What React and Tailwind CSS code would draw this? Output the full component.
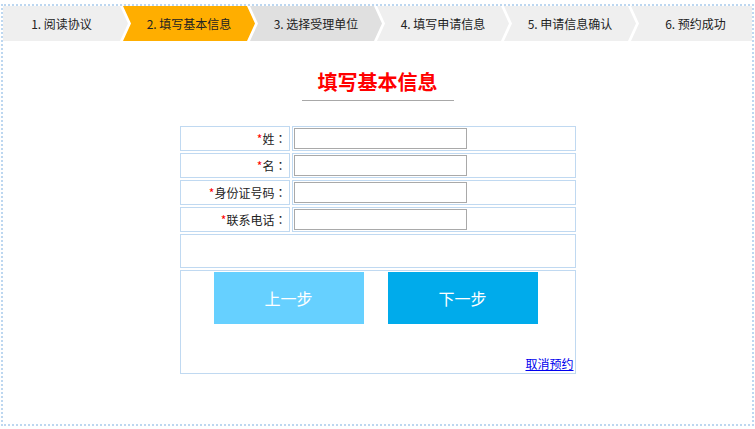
const steps = [
  { label: "1. 阅读协议", bg: "bg-[#efefef]", first: true },
  { label: "2. 填写基本信息", bg: "bg-[#ffae00]" },
  { label: "3. 选择受理单位", bg: "bg-[#e0e0e0]" },
  { label: "4. 填写申请信息", bg: "bg-[#efefef]" },
  { label: "5. 申请信息确认", bg: "bg-[#efefef]" },
  { label: "6. 预约成功", bg: "bg-[#efefef]", last: true },
];

const fields = ["姓", "名", "身份证号码", "联系电话"];

function Step({ label, bg, first, last }) {
  // chevron shapes; the 3px white gap comes from the overlap
  let shape = "w-[132px] -ml-[5px] pl-[8px] pr-[8px] [clip-path:polygon(0_0,calc(100%_-_8px)_0,100%_50%,calc(100%_-_8px)_100%,0_100%,8px_50%)]";
  if (first) shape = "w-[125px] pr-[8px] [clip-path:polygon(0_0,calc(100%_-_8px)_0,100%_50%,calc(100%_-_8px)_100%,0_100%)]";
  if (last) shape = "flex-1 -ml-[5px] pl-[8px] [clip-path:polygon(0_0,100%_0,100%_100%,0_100%,8px_50%)]";
  return (
    <div className={`${shape} ${bg} h-[35px] flex items-center justify-center text-[12px] text-[#222]`}>
      {label}
    </div>
  );
}

export default function App() {
  return (
    <div className="pt-[4px] pl-[1px] bg-white font-['Noto_Sans_CJK_SC','Liberation_Sans',sans-serif]">
      <div className="w-[753px] h-[422px] border-2 border-dotted border-[#bdd7f0]">
        <div className="flex">
          {steps.map((s) => (
            <Step key={s.label} {...s} />
          ))}
        </div>

        <div className="w-[152px] mx-auto mt-[27px] border-b border-[#a8a8a8] pb-[4px]">
          <h1 className="text-center text-[20px] leading-[28px] font-bold text-[#ff0000]">填写基本信息</h1>
        </div>

        <table className="mx-auto mt-[23px] w-[400px] table-fixed border-separate border-spacing-[2px] text-[12px] text-[#222]">
          <tbody>
            {fields.map((f) => (
              <tr key={f}>
                <td className="w-[110px] h-[25px] p-0 pr-[2px] border border-[#c0d9f1] text-right align-middle">
                  <span className="text-[#ff0000]">*</span>
                  {f}
                  <span className="font-['Noto_Sans_CJK_TC',sans-serif]">：</span>
                </td>
                <td className="h-[25px] p-0 pl-[1px] border border-[#c0d9f1] align-middle">
                  <input type="text" className="block w-[173px] h-[21px] border border-[#a9a9a9] bg-white outline-none" />
                </td>
              </tr>
            ))}
            <tr>
              <td colSpan={2} className="h-[34px] p-0 border border-[#c0d9f1]"></td>
            </tr>
            <tr>
              <td colSpan={2} className="h-[104px] p-0 border border-[#c0d9f1] align-top">
                <div className="flex flex-col h-[102px]">
                  <div className="flex justify-center gap-[24px] pt-[1px] pr-[4px]">
                    <button className="w-[150px] h-[52px] bg-[#66d0ff] text-white text-[16px]">上一步</button>
                    <button className="w-[150px] h-[52px] bg-[#00abeb] text-white text-[16px]">下一步</button>
                  </div>
                  <div className="mt-auto flex justify-end pr-[1px] pb-[1px]">
                    <a href="#" className="text-[12px] leading-[16px] text-[#0000ee] underline">取消预约</a>
                  </div>
                </div>
              </td>
            </tr>
          </tbody>
        </table>
      </div>
    </div>
  );
}
